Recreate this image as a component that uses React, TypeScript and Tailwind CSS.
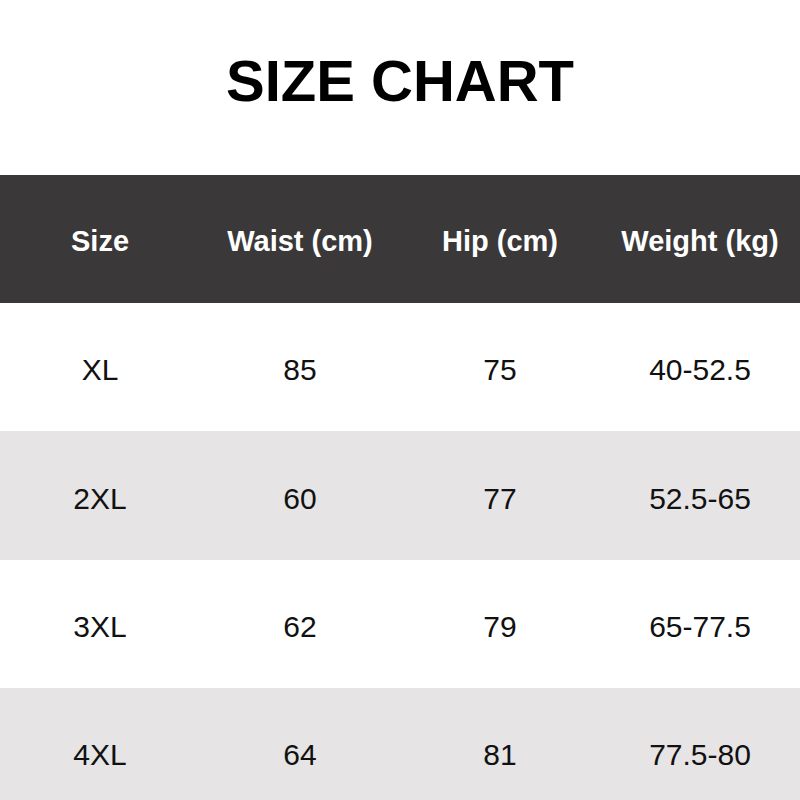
const HEADERS = ['Size', 'Waist (cm)', 'Hip (cm)', 'Weight (kg)'];

const ROWS = [
  ['XL', '85', '75', '40-52.5'],
  ['2XL', '60', '77', '52.5-65'],
  ['3XL', '62', '79', '65-77.5'],
  ['4XL', '64', '81', '77.5-80'],
];

export default function App() {
  return (
    <div className="w-[800px] h-[800px] overflow-hidden bg-white font-['Liberation_Sans',Arial,sans-serif]">
      {/* title */}
      <div className="h-[175px] flex items-center justify-center pb-[14px]">
        <h1 className="text-[58px] font-bold text-black leading-none">SIZE CHART</h1>
      </div>

      {/* header band */}
      <div className="h-[128px] grid grid-cols-4 items-center pt-[6px] bg-[#3a3839] text-white text-[29px] font-bold">
        {HEADERS.map((h) => (
          <div key={h} className="text-center">{h}</div>
        ))}
      </div>

      {/* rows */}
      {ROWS.map((row, i) => (
        <div
          key={row[0]}
          className={`${i === 1 ? 'h-[129px]' : 'h-[128px]'} grid grid-cols-4 items-center pt-[5px] text-[30px] text-[#111] ${
            i % 2 === 1 ? 'bg-[#e6e4e5]' : 'bg-white'
          }`}
        >
          {row.map((cell, j) => (
            <div key={j} className="text-center">{cell}</div>
          ))}
        </div>
      ))}
    </div>
  );
}
